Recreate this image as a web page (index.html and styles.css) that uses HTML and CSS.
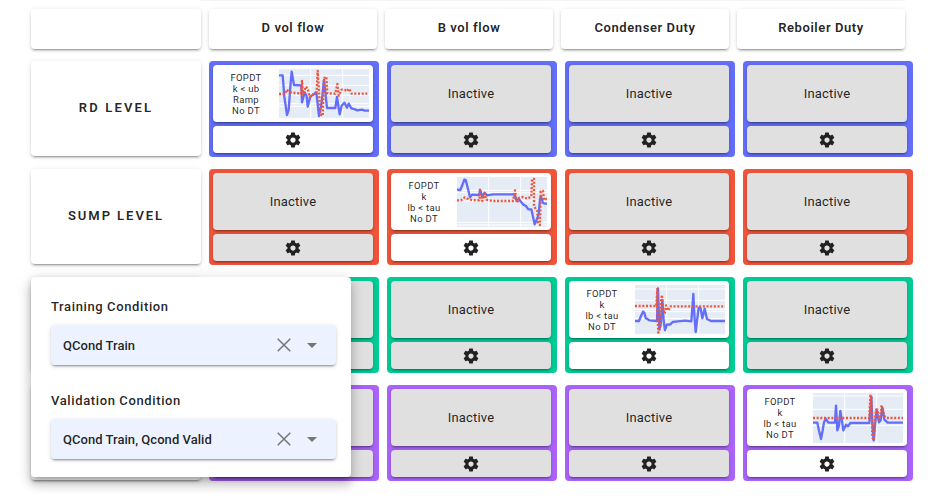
FILE: index.html
```html
<!DOCTYPE html>
<html lang="en">
<head>
<meta charset="utf-8">
<title>Model matrix</title>
<link rel="stylesheet" href="styles.css">
</head>
<body>
<svg class="defs" aria-hidden="true">
  <symbol id="gear" viewBox="0 0 24 24"><path d="M19.43 12.98c.04-.32.07-.64.07-.98s-.03-.66-.07-.98l2.11-1.65c.19-.15.24-.42.12-.64l-2-3.46c-.12-.22-.39-.3-.61-.22l-2.49 1c-.52-.4-1.08-.73-1.69-.98l-.38-2.65C14.46 2.18 14.25 2 14 2h-4c-.25 0-.46.18-.49.42l-.38 2.65c-.61.25-1.17.59-1.69.98l-2.49-1c-.23-.09-.49 0-.61.22l-2 3.46c-.13.22-.07.49.12.64l2.11 1.65c-.04.32-.07.65-.07.98s.03.66.07.98l-2.11 1.65c-.19.15-.24.42-.12.64l2 3.46c.12.22.39.3.61.22l2.49-1c.52.4 1.08.73 1.69.98l.38 2.65c.03.24.24.42.49.42h4c.25 0 .46-.18.49-.42l.38-2.65c.61-.25 1.17-.59 1.69-.98l2.49 1c.23.09.49 0 .61-.22l2-3.46c.12-.22.07-.49-.12-.64l-2.11-1.65zM12 15.5c-1.93 0-3.5-1.57-3.5-3.5s1.57-3.5 3.5-3.5 3.5 1.57 3.5 3.5-1.57 3.5-3.5 3.5z"/></symbol>
</svg>
<div class="strip"></div>
<main class="matrix">
  <div class="row head">
    <div class="card corner"></div>
    <div class="card title">D vol flow</div>
    <div class="card title">B vol flow</div>
    <div class="card title">Condenser Duty</div>
    <div class="card title">Reboiler Duty</div>
  </div>

  <div class="row blue">
    <div class="card label wide">RD Level</div>
    <div class="cell active">
      <div class="card model">
        <div class="params">FOPDT<br>k &lt; ub<br>Ramp<br>No DT</div>
        <svg class="plot" viewBox="222 42 270 150">
          <path class="grid" d="M317 42v150M413 42v150M222 61h270M222 91h270M222 121h270M222 146h270M222 154h270M222 190h270"/>
          <path class="solid" d="M222 61H233L238 125L246 180L251 165L256 95L260 50L267 90L289 91L291 142L299 112L305 124L308 155L316 125L334 112L342 183L349 150L357 75L366 159H391L396 126L404 178L410 152L418 143L426 158L431 146L439 160L450 163L457 166L470 164L480 167H492"/>
          <path class="dots" d="M222 117H240L245 104L256 112L288 116L291 78L294 121L302 95L308 100L314 126L320 122L335 110L338 48L342 110L346 178L353 183L357 70L364 65L367 115L391 116L397 87L401 122L410 104L420 105L426 109L432 101L440 116H492"/>
        </svg>
      </div>
      <div class="card gear"><svg><use href="#gear"/></svg></div>
    </div>
    <div class="cell"><div class="card model">Inactive</div><div class="card gear"><svg><use href="#gear"/></svg></div></div>
    <div class="cell"><div class="card model">Inactive</div><div class="card gear"><svg><use href="#gear"/></svg></div></div>
    <div class="cell"><div class="card model">Inactive</div><div class="card gear"><svg><use href="#gear"/></svg></div></div>
  </div>

  <div class="row red">
    <div class="card label">Sump Level</div>
    <div class="cell"><div class="card model">Inactive</div><div class="card gear"><svg><use href="#gear"/></svg></div></div>
    <div class="cell active">
      <div class="card model">
        <div class="params">FOPDT<br>k<br>lb &lt; tau<br>No DT</div>
        <svg class="plot" viewBox="222 42 270 150">
          <path class="grid" d="M317 42v150M413 42v150M222 82h270M222 89h270M222 114h270M222 178h270M222 186h270"/>
          <path class="solid" d="M222 80L232 81L238 66L244 50L248 51L254 74L261 103L267 95L289 96L291 80L298 101L305 89L312 97L330 94H394L399 110L408 109L421 125L429 129L436 139H445L451 166L455 184L461 170L467 155L471 108L474 100L480 120L486 122H492"/>
          <path class="dots" d="M222 112H234L245 103L257 109L271 111L289 112L291 82L298 114L305 92L310 110L328 114H390L396 82L402 120L409 104L420 102L433 107L445 101L447 48H453V130L463 145L465 180L471 186L473 85L480 84L483 111L492 107"/>
        </svg>
      </div>
      <div class="card gear"><svg><use href="#gear"/></svg></div>
    </div>
    <div class="cell"><div class="card model">Inactive</div><div class="card gear"><svg><use href="#gear"/></svg></div></div>
    <div class="cell"><div class="card model">Inactive</div><div class="card gear"><svg><use href="#gear"/></svg></div></div>
  </div>

  <div class="row green">
    <div class="card label"></div>
    <div class="cell"><div class="card model"></div><div class="card gear"></div></div>
    <div class="cell"><div class="card model">Inactive</div><div class="card gear"><svg><use href="#gear"/></svg></div></div>
    <div class="cell active">
      <div class="card model">
        <div class="params">FOPDT<br>k<br>lb &lt; tau<br>No DT</div>
        <svg class="plot" viewBox="222 42 270 150">
          <path class="grid" d="M317 42v150M413 42v150M222 54h270M222 88h270M222 115h270M222 122h270M222 142h270M222 190h270"/>
          <path class="solid" d="M222 150H234L240 135L246 122L250 125L254 141L265 148L288 150L291 52L295 175L299 160L304 87L308 150L312 177L318 160L327 161L335 153L350 151L372 149L391 151L397 69L400 130L404 183L408 150L413 110L419 112L424 142L431 113L438 144L450 150H492"/>
          <path class="dots" d="M222 105H286L289 54V120L292 185L298 165L300 90L303 72L306 115L311 128L315 103L322 119L328 106H492"/>
        </svg>
      </div>
      <div class="card gear"><svg><use href="#gear"/></svg></div>
    </div>
    <div class="cell"><div class="card model">Inactive</div><div class="card gear"><svg><use href="#gear"/></svg></div></div>
  </div>

  <div class="row purple">
    <div class="card label"></div>
    <div class="cell"><div class="card model"></div><div class="card gear"></div></div>
    <div class="cell"><div class="card model">Inactive</div><div class="card gear"><svg><use href="#gear"/></svg></div></div>
    <div class="cell"><div class="card model">Inactive</div><div class="card gear"><svg><use href="#gear"/></svg></div></div>
    <div class="cell active">
      <div class="card model">
        <div class="params">FOPDT<br>k<br>lb &lt; tau<br>No DT</div>
        <svg class="plot" viewBox="222 42 270 150">
          <path class="grid" d="M317 42v150M413 42v150M222 51h270M222 91h270M222 139h270"/>
          <path class="solid" d="M222 131H235L240 155L246 180L250 160L255 130L260 119L268 131H288L291 80L295 154L300 140L304 96L308 120L313 154L321 137L327 142L334 132H391L397 52L400 130L404 184L408 140L413 92L420 130L425 124L430 85L436 122L446 131H492"/>
          <path class="dots" d="M222 117H391L394 50L397 52L400 175L404 183L408 120L411 92L416 92L420 122L424 121L427 82L431 85L435 110L443 117H492"/>
        </svg>
      </div>
      <div class="card gear"><svg><use href="#gear"/></svg></div>
    </div>
  </div>
</main>

<aside class="popup">
  <div class="caption">Training Condition</div>
  <div class="card select">
    <span>QCond Train</span>
    <svg class="clear" viewBox="0 0 14 14"><path d="M.7.7l12.6 12.6M13.3.7L.7 13.3"/></svg>
    <svg class="caret" viewBox="0 0 10 5"><path d="M0 0h10L5 5z"/></svg>
  </div>
  <div class="caption">Validation Condition</div>
  <div class="card select">
    <span>QCond Train, Qcond Valid</span>
    <svg class="clear" viewBox="0 0 14 14"><path d="M.7.7l12.6 12.6M13.3.7L.7 13.3"/></svg>
    <svg class="caret" viewBox="0 0 10 5"><path d="M0 0h10L5 5z"/></svg>
  </div>
</aside>
</body>
</html>
```
FILE: styles.css
```css
* { box-sizing: border-box; }
body {
  margin: 0;
  height: 502px;
  overflow: hidden;
  background: #fff;
  color: rgba(0, 0, 0, .87);
  font-family: Roboto, "Liberation Sans", sans-serif;
  font-size: 13px;
}
.defs { position: absolute; width: 0; height: 0; }
.strip { height: 1px; margin: 0 27px 0 200px; background: #f5f5f5; }
.matrix { padding: 8px 0 0 31px; }
.row { display: flex; gap: 8px; height: 96px; margin-bottom: 12px; }
.head { height: 40px; }
.card {
  background: #fff;
  border-radius: 4px;
  box-shadow: 0 3px 1px -2px rgba(0, 0, 0, .2), 0 2px 2px 0 rgba(0, 0, 0, .14), 0 1px 5px 0 rgba(0, 0, 0, .12);
}
.corner, .label { width: 170px; }
.title {
  width: 168px;
  line-height: 38px;
  text-align: center;
  font-weight: 600;
  letter-spacing: .58px;
}
.label {
  height: 95px;
  line-height: 94px;
  text-align: center;
  text-transform: uppercase;
  font-weight: 600;
  letter-spacing: 1.95px;
}
.label.wide { letter-spacing: 2.15px; }
.cell {
  width: 170px;
  padding: 4px 6px 4px 4px;
  border-radius: 4px;
  display: flex;
  flex-direction: column;
  gap: 4px;
}
.blue .cell { background: #636efa; }
.red .cell { background: #ef553b; }
.green .cell { background: #00cc96; }
.purple .cell { background: #ab63fa; }
.cell .card { background: #e0e0e0; }
.cell.active .card { background: #fff; }
.model {
  height: 57px;
  display: flex;
  align-items: center;
  justify-content: center;
  letter-spacing: .2px;
}
.active .model { justify-content: flex-start; }
.params {
  width: 66px;
  padding-top: 1px;
  font-size: 9.5px;
  line-height: 11px;
  text-align: center;
  letter-spacing: .3px;
}
.plot { width: 90px; height: 50px; background: #e5ecf6; }
.plot path { fill: none; stroke-linejoin: round; }
.plot .grid { stroke: #fff; stroke-width: 3; }
.plot .solid { stroke: #636efa; stroke-width: 7; }
.plot .dots { stroke: #ef553b; stroke-width: 7; stroke-dasharray: 6 5; }
.gear {
  height: 27px;
  display: flex;
  align-items: center;
  justify-content: center;
}
.gear svg { width: 18px; height: 18px; fill: #212121; }
.popup {
  position: absolute;
  left: 31px;
  top: 277px;
  width: 320px;
  height: 200px;
  padding: 20px 15px 0 20px;
  background: #fff;
  border-radius: 4px;
  box-shadow: 0 5px 5px -3px rgba(0, 0, 0, .2), 0 8px 10px 1px rgba(0, 0, 0, .14), 0 3px 14px 2px rgba(0, 0, 0, .12);
}
.caption {
  height: 28px;
  line-height: 20px;
  font-weight: 500;
  letter-spacing: .62px;
}
.select {
  height: 40px;
  margin-bottom: 26px;
  padding: 0 19px 0 12px;
  display: flex;
  align-items: center;
  background: #ecf2ff;
  font-size: 13px;
  font-weight: 500;
  letter-spacing: .04px;
}
.select span { flex: 1; }
.clear { width: 14px; height: 14px; margin-right: 16px; stroke: #757575; stroke-width: 1.5; }
.caret { width: 10px; height: 5px; fill: #757575; }
```
